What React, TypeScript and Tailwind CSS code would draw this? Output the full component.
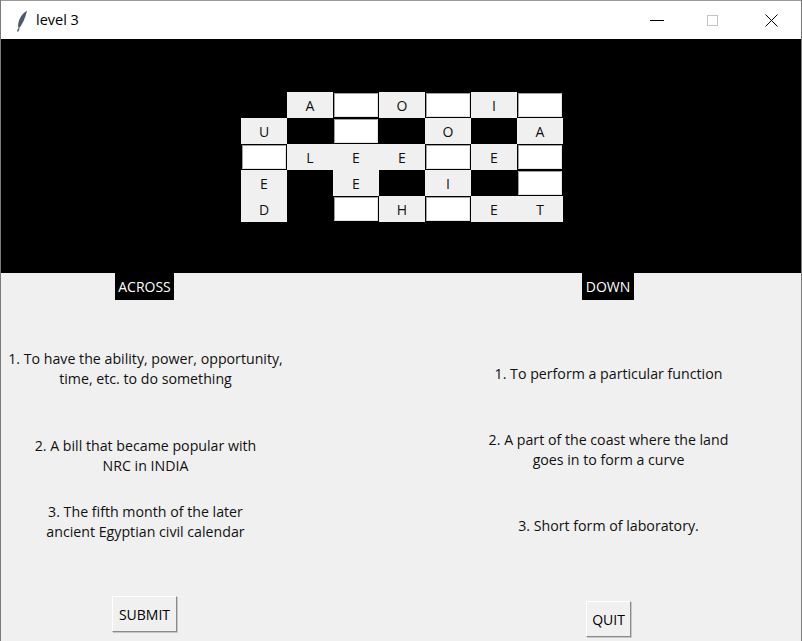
import React from "react";

// null = black square, "" = empty entry, letter = given label
const grid: (string | null)[][] = [
  [null, "A", "", "O", "", "I", ""],
  ["U", null, "", null, "O", null, "A"],
  ["", "L", "E", "E", "", "E", ""],
  ["E", null, "E", null, "I", null, ""],
  ["D", null, "", "H", "", "E", "T"],
];

const font = { fontFamily: '"Open Sans", "Noto Sans", sans-serif' };

const Feather = () => (
  <svg width="12" height="22" viewBox="0 0 12 22">
    <path d="M11 0.8 C6.5 3 3 8.5 2.2 14 C1.9 16.2 2.3 17.8 3 18.6 C6 15 9.2 8.5 11 0.8 Z" fill="#4d5a69" />
    <path d="M3 18.4 L1.5 21.5" stroke="#4d5a69" strokeWidth="1.4" />
  </svg>
);

const Cell = ({ v }: { v: string | null }) => {
  if (v === null) return <div className="w-[46px] h-[26px] bg-black" />;
  if (v === "")
    return (
      <div className="w-[46px] h-[26px] bg-black p-[1px]">
        <div className="w-full h-full bg-white border-t border-l border-[#a0a0a0] border-b-[#e3e3e3] border-r-[#e3e3e3] border-b border-r" />
      </div>
    );
  return (
    <div className="w-[46px] h-[26px] bg-[#f0f0f0] flex items-center justify-center text-[14px] text-[#111]">
      {v}
    </div>
  );
};

const Clue = ({ children, className = "" }: { children: React.ReactNode; className?: string }) => (
  <div className={`text-center text-[14.2px] leading-[20px] text-[#111] ${className}`}>{children}</div>
);

export default function App() {
  return (
    <div
      className="w-[802px] h-[641px] bg-[#f0f0f0] flex flex-col border-l border-r border-[#7a7a7a] overflow-hidden"
      style={font}
    >
      {/* title bar */}
      <div className="h-[39px] bg-white flex items-center border-t border-[#9a9a9a]">
        <div className="ml-[15px] mt-[1px]">
          <Feather />
        </div>
        <span className="ml-[8px] text-[14.5px] text-black">level 3</span>
        <div className="ml-auto flex items-center h-full">
          <div className="w-[14px] h-[1px] bg-black mr-[43px]" />
          <div className="w-[11px] h-[11px] border border-[#c4c4c4] mr-[47px]" />
          <svg width="13" height="13" viewBox="0 0 13 13" className="mr-[23px]">
            <path d="M0.5 0.5 L12.5 12.5 M12.5 0.5 L0.5 12.5" stroke="#000" strokeWidth="1" />
          </svg>
        </div>
      </div>

      {/* puzzle area */}
      <div className="h-[234px] bg-black pt-[53px] pl-[240px]">
        <div className="flex flex-col">
          {grid.map((row, r) => (
            <div key={r} className="flex">
              {row.map((v, c) => (
                <Cell key={c} v={v} />
              ))}
            </div>
          ))}
        </div>
      </div>

      {/* clues */}
      <div className="flex flex-1">
        <div className="w-[289px] flex flex-col items-center">
          <div className="bg-black text-white text-[14px] leading-[27px] px-[3.5px] -ml-[2px]">ACROSS</div>
          <Clue className="mt-[49px]">
            1. To have the ability, power, opportunity,
            <br />
            time, etc. to do something
          </Clue>
          <Clue className="mt-[47px]">
            2. A bill that became popular with
            <br />
            NRC in INDIA
          </Clue>
          <Clue className="mt-[26px]">
            3. The fifth month of the later
            <br />
            ancient Egyptian civil calendar
          </Clue>
          <button className="mt-[54px] -ml-[2px] h-[36px] px-[6px] bg-[#f0f0f0] border border-t-white border-l-white border-r-[#8a8a8a] border-b-[#8a8a8a] shadow-[1px_1px_0_#c8c8c8] text-[14px] text-black">
            SUBMIT
          </button>
        </div>
        <div className="w-[127px]" />
        <div className="w-[383px] flex flex-col items-center">
          <div className="bg-black text-white text-[14px] leading-[27px] px-[4px] -ml-[1px]">DOWN</div>
          <Clue className="mt-[64px]">1. To perform a particular function</Clue>
          <Clue className="mt-[46px]">
            2. A part of the coast where the land
            <br />
            goes in to form a curve
          </Clue>
          <Clue className="mt-[46px]">3. Short form of laboratory.</Clue>
          <button className="mt-[65px] h-[36px] px-[5px] bg-[#f0f0f0] border border-t-white border-l-white border-r-[#8a8a8a] border-b-[#8a8a8a] shadow-[1px_1px_0_#c8c8c8] text-[14px] text-black">
            QUIT
          </button>
        </div>
      </div>
    </div>
  );
}
